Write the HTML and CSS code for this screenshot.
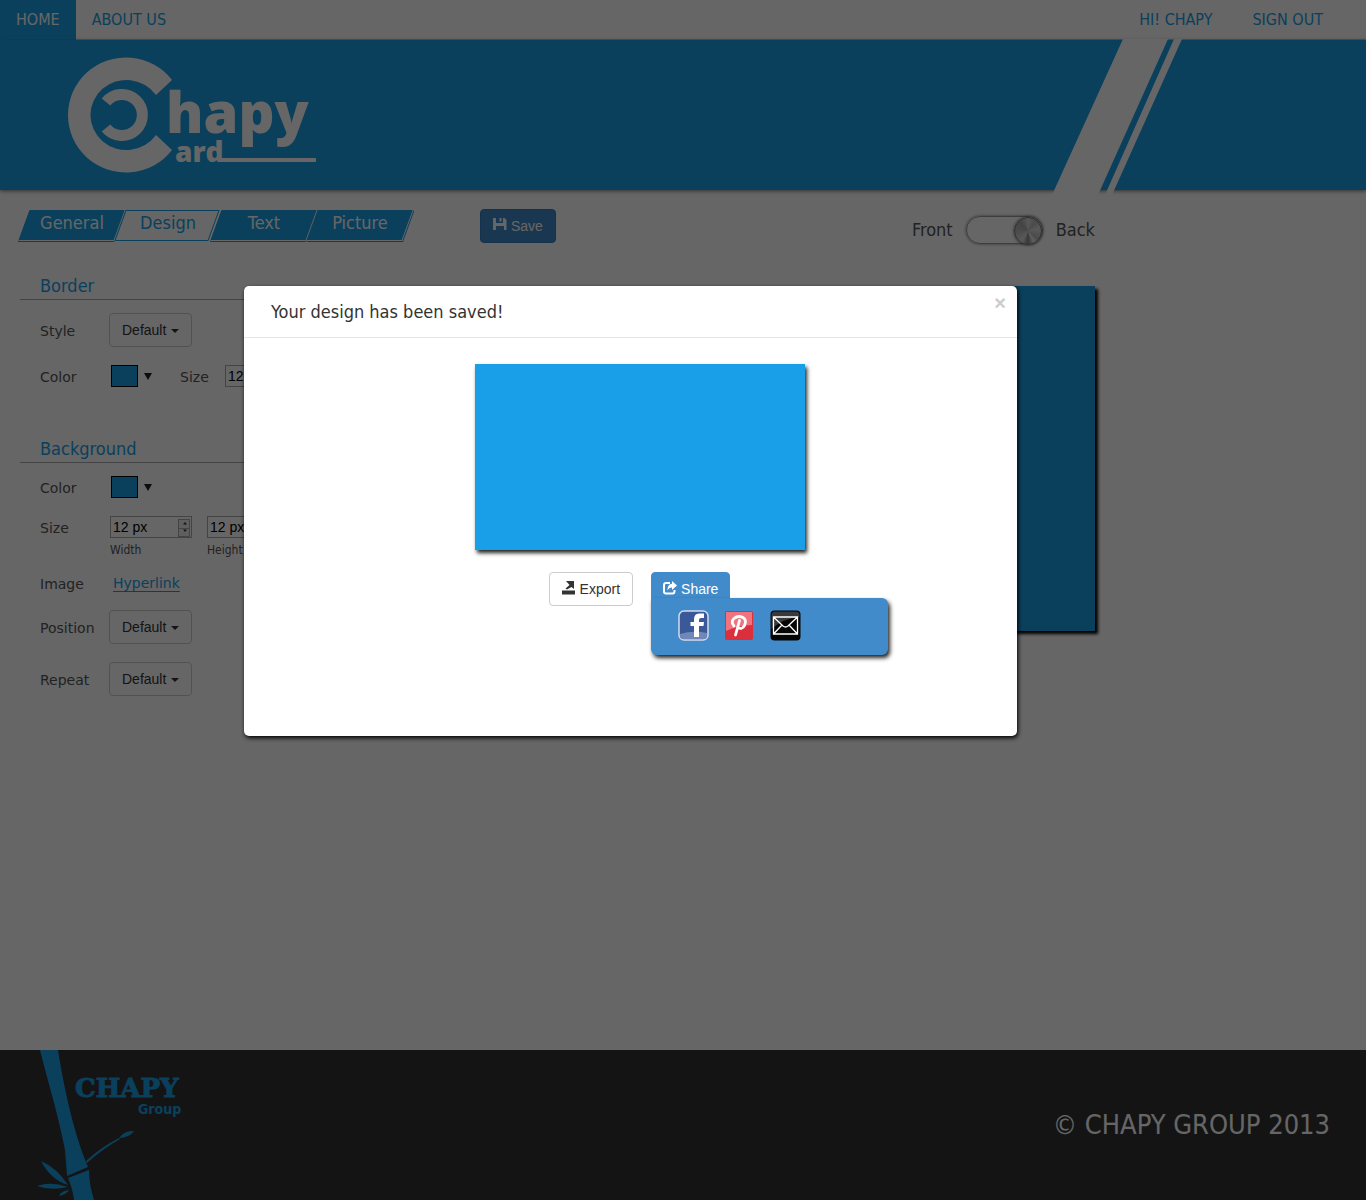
FILE: index.html
```html
<!DOCTYPE html>
<html lang="en">
<head>
<meta charset="utf-8">
<meta name="viewport" content="width=device-width, initial-scale=1">
<title>Chapy Card</title>
<link rel="stylesheet" href="styles.css">
</head>
<body>
<nav class="topbar">
  <a class="topbar-link active" href="#">HOME</a>
  <a class="topbar-link" href="#">ABOUT US</a>
  <a class="topbar-link user" href="#">HI! CHAPY</a>
  <a class="topbar-link signout" href="#">SIGN OUT</a>
</nav>
<header class="banner">
  <svg class="logo" width="256" height="120" viewBox="0 0 256 120" role="img" aria-label="Chapy Card">
    <path fill="#fff" d="M108 24A58 57.500 0 1 0 108 94L92 79A36 35 0 1 1 92 39z"/>
    <path fill="none" stroke="#fff" stroke-width="11" d="M42 46A20.500 20.500 0 1 1 42 72"/>
    <text class="logo-text"><tspan class="logo-big" x="102" y="77">hapy</tspan><tspan class="logo-small" x="111" y="106">ard</tspan></text>
    <path fill="#fff" d="M156 102h96v4h-96z"/>
  </svg>
  <svg class="stripes" width="130" height="156" viewBox="0 0 130 156" aria-hidden="true">
    <path fill="#fff" d="M71 0H116L46 156H0zM122 0H130L60 156H53z"/>
  </svg>
</header>
<main class="workspace">
  <section class="options">
    <div class="tabs">
      <button class="tab" type="button">General</button>
      <button class="tab selected" type="button">Design</button>
      <button class="tab" type="button">Text</button>
      <button class="tab" type="button">Picture</button>
    </div>
    <h2 class="group-title">Border</h2>
    <div class="group">
      <div class="row">
        <label class="row-label" for="border-style">Style</label>
        <span class="dropdown"><select id="border-style"><option>Default</option></select></span>
      </div>
      <div class="row">
        <label class="row-label" for="border-color">Color</label>
        <span class="swatch"><input type="color" id="border-color" value="#19a0e6"></span>
        <label class="row-label inline" for="border-size">Size</label>
        <span class="stepper"><input type="text" id="border-size" value="12 px"></span>
      </div>
    </div>
    <h2 class="group-title second">Background</h2>
    <div class="group">
      <div class="row">
        <label class="row-label" for="bg-color">Color</label>
        <span class="swatch"><input type="color" id="bg-color" value="#19a0e6"></span>
      </div>
      <div class="row sizes">
        <span class="row-label">Size</span>
        <span class="field">
          <span class="stepper"><input type="text" id="bg-width" value="12 px"></span>
          <label class="hint" for="bg-width">Width</label>
        </span>
        <span class="field">
          <span class="stepper"><input type="text" id="bg-height" value="12 px"></span>
          <label class="hint" for="bg-height">Height</label>
        </span>
      </div>
      <div class="row image-row">
        <span class="row-label">Image</span>
        <a class="image-link" href="#">Hyperlink</a>
      </div>
      <div class="row">
        <label class="row-label" for="bg-position">Position</label>
        <span class="dropdown"><select id="bg-position"><option>Default</option></select></span>
      </div>
      <div class="row">
        <label class="row-label" for="bg-repeat">Repeat</label>
        <span class="dropdown"><select id="bg-repeat"><option>Default</option></select></span>
      </div>
    </div>
  </section>
  <section class="canvas">
    <div class="canvas-bar">
      <button class="btn btn-primary" type="button">
        <svg class="btn-icon" width="14" height="14" viewBox="0 0 14 14" aria-hidden="true"><path fill="#fff" d="M0 0H3V5H10V0H11.500L13.500 2V12H11V8H3V12H0zM6.500 0H8.500V3.500H6.500z"/></svg>
        Save
      </button>
      <div class="side-switch">
        <label for="side">Front</label>
        <input type="checkbox" id="side" checked>
        <label for="side">Back</label>
      </div>
    </div>
    <div class="card"></div>
  </section>
</main>
<footer class="footer">
  <svg class="group-logo" width="160" height="150" viewBox="0 0 160 150" role="img" aria-label="Chapy Group">
    <g fill="#19a0e6">
      <path d="M9 0H27Q30 20 36 48Q46 92 57 117L36 126Q35 112 34 100Q28 70 19 38Q12 12 9 0z"/>
      <path d="M37 128L58 120Q58 134 63 150H43Q42 140 37 128z"/>
      <path d="M10 111Q26 118 37 135Q20 130 10 111zM6 136Q20 131 37 137Q20 141 6 136zM28 146Q30 141 38 140Q36 144 28 146zM88 88Q94 80 103 81Q98 88 88 88z"/>
      <path d="M55 111Q70 97 88 88L89 89Q70 100 56 113z"/>
    </g>
    <text class="group-text"><tspan class="group-name" x="44" y="47">CHAPY</tspan><tspan class="group-sub" x="107" y="64">Group</tspan></text>
  </svg>
  <p class="copyright">© CHAPY GROUP 2013</p>
</footer>

<div class="backdrop">
  <div class="modal" role="dialog" aria-labelledby="modal-title">
    <div class="modal-head">
      <h1 class="modal-title" id="modal-title">Your design has been saved!</h1>
      <button class="close" type="button" aria-label="Close">×</button>
    </div>
    <div class="modal-body">
      <div class="preview"></div>
      <div class="actions">
        <button class="btn btn-default" type="button">
          <svg class="btn-icon" width="14" height="14" viewBox="0 0 14 14" aria-hidden="true"><path fill="#333" d="M0 9.500H13V13.500H0zM4 0H12V8L9.500 6L5 8.500L3.500 7.500L7.500 4z"/></svg>
          Export
        </button>
        <div class="share">
          <button class="btn btn-share" type="button">
            <svg class="btn-icon" width="14" height="14" viewBox="0 0 14 14" aria-hidden="true"><path fill="none" stroke="#fff" stroke-width="2" d="M7 2H3Q1 2 1 4V10.500Q1 12.500 3 12.500H9.500Q11.500 12.500 11.500 10V9"/><path fill="#fff" d="M9 0L14 4.500L9 9V6.500Q6 6.500 4.500 9.500Q4.500 3 9 2.800z"/></svg>
            Share
          </button>
          <div class="share-menu">
            <a href="#" aria-label="Facebook"><svg width="31" height="31" viewBox="0 0 31 31"><rect x="1" y="1" width="29" height="29" rx="5" fill="#3b5998" stroke="#d3dbeb" stroke-width="1.500"/><path fill="#7087b7" d="M2 24Q15 20 29 23V26Q29 29 26 29H5Q2 29 2 26z"/><path fill="#fff" d="M16 27V16H12.500V12H16V9.500Q16 3.500 21 3.500H26V8H23Q21 8 21 10V12H26L25.500 16H21V27z"/></svg></a>
            <a href="#" aria-label="Pinterest"><svg width="31" height="31" viewBox="0 0 31 31"><rect x="1" y="1" width="28" height="29" rx="2" fill="#dc2f3d"/><path fill="#f1737d" d="M2 2H28V15Q14 15 2 21z"/><path fill="none" stroke="#fff" stroke-width="2.800" stroke-linecap="round" d="M10 16Q6.500 12 10 8.500Q14 5 19 7.500Q23 10 20.500 15.500Q18 20 14 17.500M15.500 10.500L11.500 25"/></svg></a>
            <a href="#" aria-label="Email"><svg width="31" height="31" viewBox="0 0 31 31"><rect x="0.500" y="0.500" width="30" height="30" rx="4" fill="#050505"/><path fill="#3a3a3a" d="M5 1.500H26Q29.500 1.500 29.500 5V7Q14 8 1.500 19V5Q1.500 1.500 5 1.500z"/><path fill="none" stroke="#fff" stroke-width="1.300" d="M3.500 7H27.500V24H3.500zM3.500 7L13 16Q15.500 18 18 16L27.500 7M3.500 24L12 15M27.500 24L19 15"/></svg></a>
          </div>
        </div>
      </div>
    </div>
  </div>
</div>
</body>
</html>
```
FILE: styles.css
```css
* { box-sizing: border-box; }

body {
  margin: 0;
  min-height: 100vh;
  display: flex;
  flex-direction: column;
  position: relative;
  background: #fff;
  color: #333;
  font: 14px/20px "DejaVu Sans", Verdana, sans-serif;
}

button, input, select { font-family: "Liberation Sans", Arial, sans-serif; }

.topbar {
  display: flex;
  height: 40px;
  border-bottom: 1px solid #ccc;
  font: 16px/40px "DejaVu Sans Condensed", "Trebuchet MS", sans-serif;
}
.topbar-link {
  height: 40px;
  padding: 0 16px;
  color: #19a0e6;
  text-decoration: none;
}
.topbar-link.active { background: #19a0e6; color: #fff; }
.topbar-link.user { margin-left: auto; padding-right: 24px; }
.topbar-link.signout { padding-right: 43px; }

.banner {
  position: relative;
  height: 150px;
  padding: 16px 64px;
  background: #19a0e6;
  box-shadow: 0 1px 4px #777;
}
.logo { display: block; }
.logo-text { font-family: "Open Sans", sans-serif; font-weight: 800; fill: #fff; }
.logo-big { font-size: 56px; }
.logo-small { font-size: 28px; }
.stripes { position: absolute; top: -1px; right: 184px; }

.workspace {
  flex: 1;
  display: grid;
  grid-template-columns: 420px 615px;
  column-gap: 40px;
  padding: 19px 20px;
}

.tabs { display: flex; padding-left: 4px; }
.tab {
  position: relative;
  z-index: 0;
  width: 96px;
  height: 32px;
  padding: 0 0 4px;
  border: 0;
  background: none;
  color: #fff;
  font: 18px/28px "DejaVu Sans Condensed", "Trebuchet MS", sans-serif;
}
.tab::before {
  content: "";
  position: absolute;
  z-index: -1;
  inset: 1px 0 0 0;
  background: #19a0e6;
  border: solid #fff;
  border-width: 0 1px 1px 0;
  box-shadow: 0 1px #19a0e6;
  transform: skewX(-20deg);
}
.tab:last-child::before { box-shadow: 1px 1px #19a0e6; }
.tab.selected { color: #19a0e6; }
.tab.selected::before { right: 2px; background: #fff; border: 1px solid #19a0e6; box-shadow: none; }

.group-title {
  margin: 32px 0 0;
  padding: 0 20px;
  height: 27px;
  border-bottom: 1px solid #aaa;
  color: #19a0e6;
  font: 18px/26px "DejaVu Sans Condensed", "Trebuchet MS", sans-serif;
}
.group-title.second { margin-top: 49px; }
.group { display: flex; flex-direction: column; gap: 18px; padding: 13px 20px 0; }
.row { display: flex; align-items: center; }
.row-label { width: 69px; padding-top: 2px; color: #555; }
.row-label.inline { width: 45px; margin-left: 28px; }
.row.sizes { align-items: flex-start; }
.row.image-row { margin: -8px 0 -2px; }
.field { display: flex; flex-direction: column; margin: 0 14px 0 1px; }
.hint { color: #555; font: 12px/24px "DejaVu Sans Condensed", Tahoma, sans-serif; }
.image-link { margin-left: 4px; color: #19a0e6; text-underline-offset: 3px; }

.dropdown { position: relative; }
.dropdown select {
  display: block;
  width: 83px;
  height: 34px;
  padding: 0 12px;
  appearance: none;
  border: 1px solid #ccc;
  border-radius: 4px;
  background: #fff;
  color: #333;
  font-size: 14px;
}
.dropdown::after {
  content: "";
  position: absolute;
  top: 16px;
  right: 13px;
  border: 4px solid transparent;
  border-top-color: #333;
  border-bottom: 0;
  pointer-events: none;
}

.swatch { display: flex; align-items: center; gap: 6px; margin-left: 2px; }
.swatch input {
  width: 27px;
  height: 22px;
  padding: 0;
  appearance: none;
  border: 1px solid #000;
  background: #19a0e6;
}
.swatch input::-webkit-color-swatch-wrapper { padding: 0; }
.swatch input::-webkit-color-swatch { border: 0; }
.swatch::after {
  content: "";
  border: 4px solid transparent;
  border-top: 7px solid #222;
  border-bottom: 0;
}

.stepper { position: relative; }
.stepper input {
  display: block;
  width: 82px;
  height: 22px;
  padding: 0 2px;
  border: 1px solid #aaa;
  background: #fff;
  color: #000;
  font-size: 14px;
}
.stepper::before, .stepper::after {
  content: "";
  position: absolute;
  pointer-events: none;
}
.stepper::before {
  top: 3px;
  right: 2px;
  width: 10px;
  height: 16px;
  border: 1px solid #aaa;
  background: linear-gradient(#aaa, #aaa) 0 50% / 100% 1px no-repeat #eee;
}
.stepper::after {
  top: 6px;
  right: 5px;
  width: 4px;
  height: 10px;
  background: #333;
  clip-path: polygon(50% 0, 100% 25%, 0 25%, 50% 0, 0 75%, 100% 75%, 50% 100%, 0 75%);
}

.canvas-bar { display: flex; justify-content: space-between; align-items: flex-start; height: 77px; }
.btn {
  display: flex;
  align-items: center;
  gap: 4px;
  height: 34px;
  padding: 0 12px;
  border: 1px solid #ccc;
  border-radius: 4px;
  background: #fff;
  color: #333;
  font-size: 14px;
}
.btn-icon { margin-bottom: 3px; }
.btn-primary { background: #428bca; border-color: #357ebd; color: #fff; }
.side-switch {
  display: flex;
  align-items: center;
  gap: 13px;
  padding-top: 6px;
  color: #555;
  font: 18px/30px "DejaVu Sans Condensed", "Trebuchet MS", sans-serif;
}
.side-switch input {
  position: relative;
  width: 77px;
  height: 28px;
  margin: 0;
  appearance: none;
  border: 1px solid #999;
  border-radius: 14px;
  box-shadow: 0 0 3px #777;
}
.side-switch input::after {
  content: "";
  position: absolute;
  top: 0;
  left: 0;
  width: 26px;
  height: 26px;
  border: 1px solid #777;
  border-radius: 50%;
  background: conic-gradient(#ddd, #bbb 40deg, #ddd 80deg, #bbb 130deg, #eee 150deg, #888 180deg, #ddd 210deg, #bbb 270deg, #aaa 320deg, #ddd);
  box-shadow: 0 0 3px #555;
}
.side-switch input:checked::after { left: auto; right: 0; }
.card { height: 345px; background: #19a0e6; box-shadow: 3px 3px 3px #000; }

.footer {
  display: flex;
  justify-content: space-between;
  align-items: center;
  height: 150px;
  padding: 0 36px 0 31px;
  background: #323232;
}
.group-text { fill: #19a0e6; }
.group-name { font: bold 26px "DejaVu Serif", serif; stroke: #19a0e6; stroke-width: 1px; }
.group-sub { font: bold 14px "DejaVu Sans Condensed", sans-serif; }
.copyright { margin: 0; color: #fff; font: 27px/32px "DejaVu Sans Condensed", "Trebuchet MS", sans-serif; }

.backdrop {
  position: absolute;
  inset: 0;
  padding: 286px 349px 0 244px;
  background: rgba(0, 0, 0, .6);
}
.modal {
  min-height: 450px;
  border-radius: 5px;
  background: #fff;
  box-shadow: 1px 2px 4px #000;
}
.modal-head {
  display: flex;
  justify-content: space-between;
  height: 52px;
  padding: 0 11px 0 27px;
  border-bottom: 1px solid #e5e5e5;
}
.modal-title { margin: 0; font: 18px/51px "DejaVu Sans Condensed", Tahoma, sans-serif; }
.close {
  align-self: flex-start;
  padding: 6px 0;
  border: 0;
  background: none;
  color: #ccc;
  font-size: 20px;
  font-weight: bold;
  line-height: 22px;
}
.modal-body {
  display: flex;
  flex-direction: column;
  align-items: center;
  gap: 22px;
  padding: 26px 0 0 18px;
}
.preview { width: 330px; height: 186px; background: #189fe8; box-shadow: 2px 3px 4px #222; }
.actions { display: flex; gap: 18px; }
.share { position: relative; }
.btn-share { padding: 0 11px; border-color: #428bca; background: #428bca; color: #fff; }
.share-menu {
  position: absolute;
  top: 26px;
  left: 0;
  display: flex;
  gap: 15px;
  width: 237px;
  height: 57px;
  padding: 12px 27px;
  border-radius: 0 6px 6px 6px;
  background: #428bca;
  box-shadow: 2px 3px 4px #222;
}
```
